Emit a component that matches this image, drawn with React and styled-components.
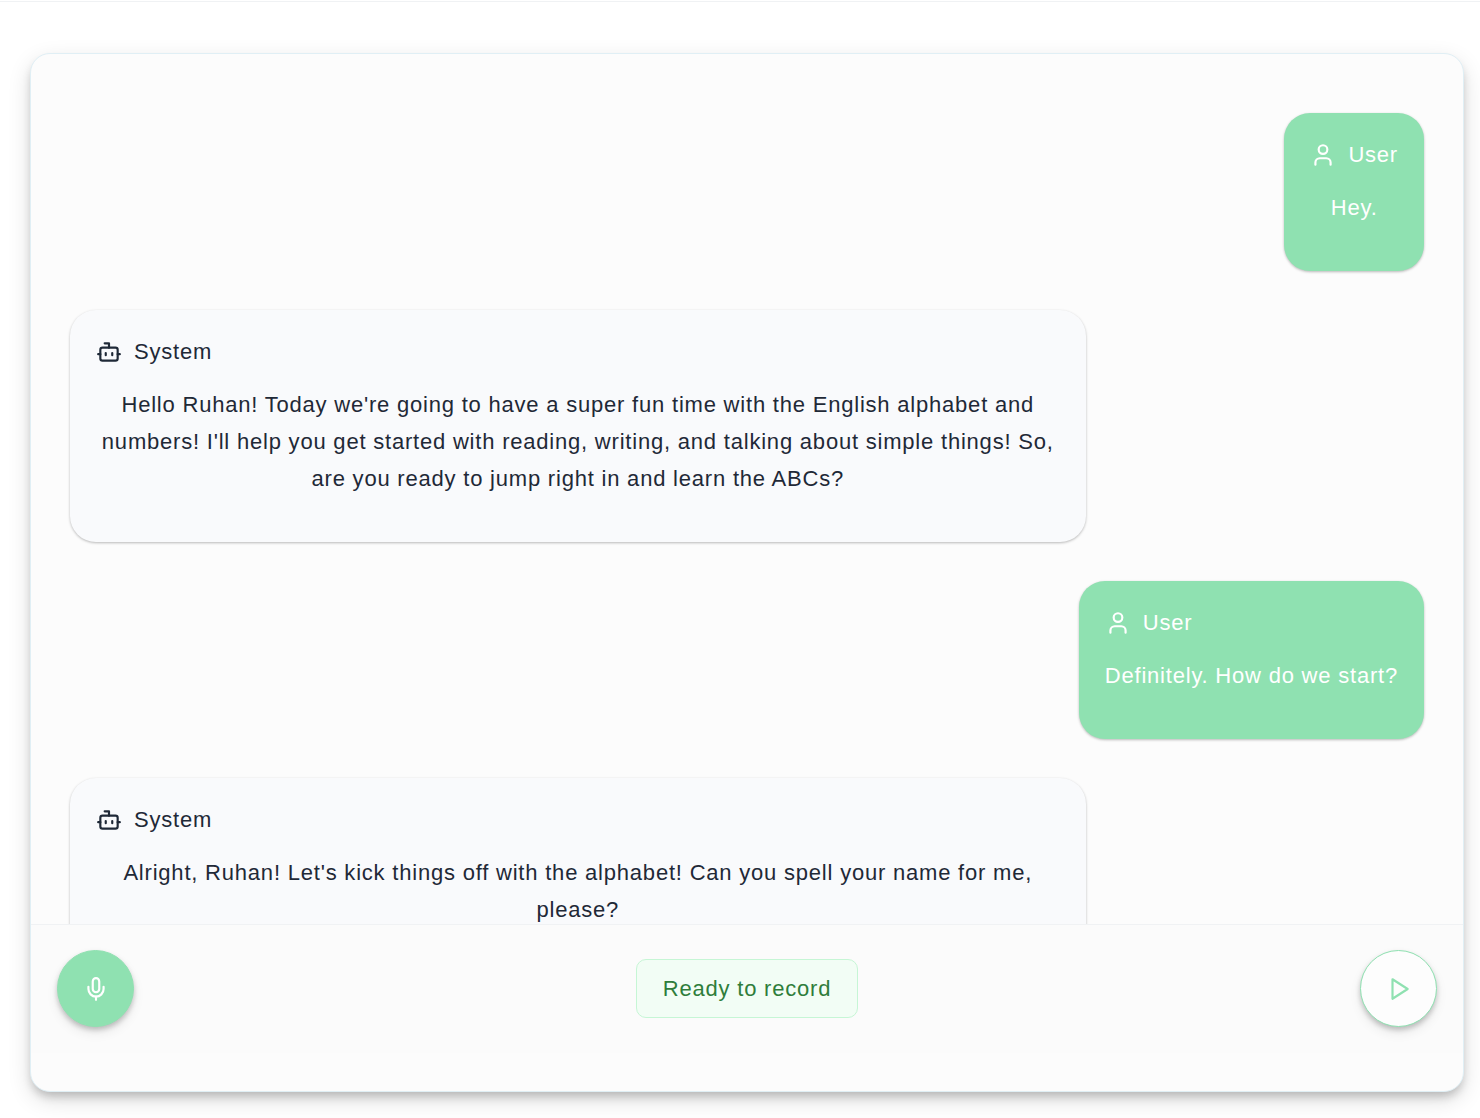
import React from 'react'
import styled, { createGlobalStyle } from 'styled-components'
import { Bot, Mic, User } from 'lucide-react'

const colors = {
  primary: '#8fe1b1',
  surface: '#fcfcfc',
  footer: '#fbfbfb',
  system: '#f9fafc',
  text: '#1f2937',
  border: '#e0eff5',
  line: '#f0f2f4',
}

const GlobalStyle = createGlobalStyle`
  * {
    box-sizing: border-box;
  }
  body {
    margin: 0;
    background-color: #ffffff;
    color: ${colors.text};
    font-family: 'Liberation Sans', Arial, sans-serif;
    font-size: 22px;
    letter-spacing: 0.036em;
  }
`

const Page = styled.main`
  display: flex;
  flex-direction: column;
  height: 100vh;
  padding: 1px 16px 26px 30px;
`
const TopLine = styled.hr`
  width: 100vw;
  height: 1px;
  margin: 0 0 51px -30px;
  border: 0;
  background-color: ${colors.line};
  flex-shrink: 0;
`
const ChatCard = styled.section`
  display: flex;
  flex-direction: column;
  flex: 1;
  min-height: 0;
  padding-bottom: 38px;
  border: 1px solid ${colors.border};
  border-radius: 20px;
  background-color: ${colors.surface};
  box-shadow: 0 6px 10px -2px rgba(0, 0, 0, 0.2),
    0 8px 24px -2px rgba(0, 0, 0, 0.16);
`
const Messages = styled.div`
  display: flex;
  flex-direction: column;
  flex: 1;
  gap: 39px;
  min-height: 0;
  padding: 59px 39px 0;
  overflow-y: auto;
  scrollbar-width: none;
`
const Bubble = styled.article`
  flex-shrink: 0;
  max-width: 75%;
  padding: 26px;
  border-radius: 26px;
  align-self: ${({ $user }) => ($user ? 'flex-end' : 'flex-start')};
  background-color: ${({ $user }) => ($user ? colors.primary : colors.system)};
  color: ${({ $user }) => ($user ? '#ffffff' : colors.text)};
  box-shadow: 0 1px 3px rgba(0, 0, 0, 0.2), 0 1px 2px rgba(0, 0, 0, 0.08);
`
const Author = styled.header`
  display: flex;
  align-items: center;
  gap: 12px;
  line-height: 31px;
`
const Message = styled.p`
  margin: 19px 0;
  line-height: 37px;
  text-align: center;
`
const Controls = styled.footer`
  display: flex;
  align-items: center;
  justify-content: space-between;
  padding: 25px 26px 26px;
  border-top: 1px solid ${colors.line};
  background-color: ${colors.footer};
`
const RoundButton = styled.button`
  display: flex;
  align-items: center;
  justify-content: center;
  width: 77px;
  height: 77px;
  padding: 0;
  border: 1px solid ${colors.primary};
  border-radius: 50%;
  background-color: ${({ $filled }) => ($filled ? colors.primary : '#fdfdfd')};
  color: ${({ $filled }) => ($filled ? '#ffffff' : colors.primary)};
  box-shadow: 0 3px 5px rgba(0, 0, 0, 0.2), 0 6px 12px rgba(0, 0, 0, 0.08);
  cursor: pointer;
`
const Status = styled.output`
  padding: 10px 26px;
  border: 1px solid #c6f6d5;
  border-radius: 10px;
  background-color: #f2fdf5;
  color: #2f7d3b;
  line-height: 37px;
`

const PlayIcon = () => (
  <svg
    width="26"
    height="26"
    viewBox="0 0 24 24"
    fill="none"
    stroke="currentColor"
    strokeWidth="2"
    strokeLinecap="round"
    strokeLinejoin="round"
    aria-hidden="true"
  >
    <polygon points="6 3 20 12 6 21 6 3" />
  </svg>
)

const messages = [
  { id: 1, author: 'User', text: 'Hey.' },
  {
    id: 2,
    author: 'System',
    text: "Hello Ruhan! Today we're going to have a super fun time with the English alphabet and numbers! I'll help you get started with reading, writing, and talking about simple things! So, are you ready to jump right in and learn the ABCs?",
  },
  { id: 3, author: 'User', text: 'Definitely. How do we start?' },
  {
    id: 4,
    author: 'System',
    text: "Alright, Ruhan! Let's kick things off with the alphabet! Can you spell your name for me, please?",
  },
]

const App = () => {
  return (
    <>
      <GlobalStyle />
      <Page>
        <TopLine />
        <ChatCard>
          <Messages>
            {messages.map(({ id, author, text }) => {
              const isUser = author === 'User'
              return (
                <Bubble key={id} $user={isUser}>
                  <Author>
                    {isUser ? <User size={26} /> : <Bot size={26} />}
                    <span>{author}</span>
                  </Author>
                  <Message>{text}</Message>
                </Bubble>
              )
            })}
          </Messages>
          <Controls>
            <RoundButton type="button" $filled aria-label="Record">
              <Mic size={26} />
            </RoundButton>
            <Status>Ready to record</Status>
            <RoundButton type="button" aria-label="Play">
              <PlayIcon />
            </RoundButton>
          </Controls>
        </ChatCard>
      </Page>
    </>
  )
}

export default App
